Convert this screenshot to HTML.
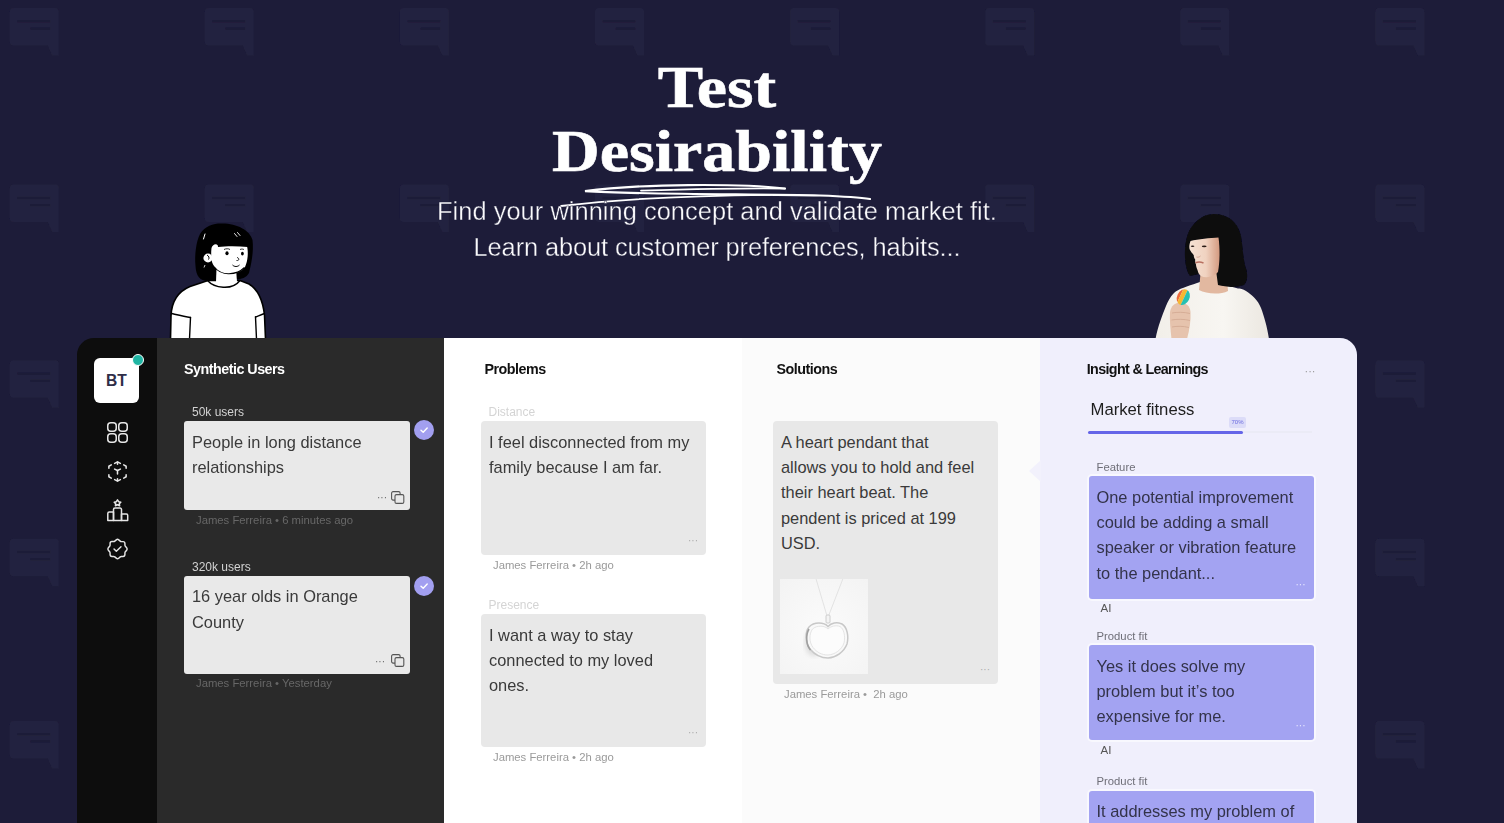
<!DOCTYPE html>
<html><head><meta charset="utf-8">
<style>
*{margin:0;padding:0;box-sizing:border-box}
html,body{width:1504px;height:823px;overflow:hidden}
body{background:#1d1c39;font-family:"Liberation Sans",sans-serif;position:relative}
.abs{position:absolute}
#bg{position:absolute;left:0;top:0}
.hero{position:absolute;left:0;width:1434px;text-align:center;color:#fff;font-family:"Liberation Serif",serif;font-weight:700}
.sub{position:absolute;left:0;width:1434px;text-align:center;color:#fafafc;font-size:25px;white-space:nowrap;-webkit-text-stroke:0.35px #1d1c39}
#panel{position:absolute;left:77px;top:338px;width:1280px;height:520px;border-radius:17px 17px 0 0;overflow:hidden}
.col{position:absolute;top:0;height:100%}
.ttl{position:absolute;font-weight:700;font-size:14.3px;letter-spacing:-0.5px;white-space:nowrap;line-height:16px}
.lbl{position:absolute;font-size:12px;white-space:nowrap}
.card{position:absolute;border-radius:4px;background:#e8e8e8}
.ct{position:absolute;left:8px;top:9px;font-size:16.4px;line-height:25.2px;color:#3a3a3a;white-space:nowrap}
.meta{position:absolute;font-size:11.3px;white-space:nowrap}
.dots{position:absolute;font-size:10px;letter-spacing:0px;line-height:10px}
</style></head><body>
<svg id="bg" width="1504" height="823">
<defs>
<g id="b">
<path d="M4 0H45a4 4 0 0 1 4 4V47.5H42.5L38 37.5H4a4 4 0 0 1-4-4V4a4 4 0 0 1 4-4Z" fill="#24233f"/>
<rect x="7.5" y="12.2" width="33" height="2.3" fill="#1d1c38"/>
<rect x="20.5" y="19.4" width="20" height="2.3" fill="#1d1c38"/>
</g>
<filter id="bb" x="-5%" y="-5%" width="110%" height="110%"><feGaussianBlur stdDeviation="0.6"/></filter>
</defs>
<g filter="url(#bb)">
<use href="#b" x="9.8" y="8.0"/>
<use href="#b" x="204.8" y="8.0"/>
<use href="#b" x="399.9" y="8.0"/>
<use href="#b" x="595.0" y="8.0"/>
<use href="#b" x="790.1" y="8.0"/>
<use href="#b" x="985.2" y="8.0"/>
<use href="#b" x="1180.3" y="8.0"/>
<use href="#b" x="1375.4" y="8.0"/>
<use href="#b" x="9.8" y="184.6"/>
<use href="#b" x="204.8" y="184.6"/>
<use href="#b" x="399.9" y="184.6"/>
<use href="#b" x="595.0" y="184.6"/>
<use href="#b" x="790.1" y="184.6"/>
<use href="#b" x="985.2" y="184.6"/>
<use href="#b" x="1180.3" y="184.6"/>
<use href="#b" x="1375.4" y="184.6"/>
<use href="#b" x="9.8" y="360.2"/>
<use href="#b" x="204.8" y="360.2"/>
<use href="#b" x="399.9" y="360.2"/>
<use href="#b" x="595.0" y="360.2"/>
<use href="#b" x="790.1" y="360.2"/>
<use href="#b" x="985.2" y="360.2"/>
<use href="#b" x="1180.3" y="360.2"/>
<use href="#b" x="1375.4" y="360.2"/>
<use href="#b" x="9.8" y="538.7"/>
<use href="#b" x="204.8" y="538.7"/>
<use href="#b" x="399.9" y="538.7"/>
<use href="#b" x="595.0" y="538.7"/>
<use href="#b" x="790.1" y="538.7"/>
<use href="#b" x="985.2" y="538.7"/>
<use href="#b" x="1180.3" y="538.7"/>
<use href="#b" x="1375.4" y="538.7"/>
<use href="#b" x="9.8" y="720.9"/>
<use href="#b" x="204.8" y="720.9"/>
<use href="#b" x="399.9" y="720.9"/>
<use href="#b" x="595.0" y="720.9"/>
<use href="#b" x="790.1" y="720.9"/>
<use href="#b" x="985.2" y="720.9"/>
<use href="#b" x="1180.3" y="720.9"/>
<use href="#b" x="1375.4" y="720.9"/>
</g>
</svg>

<div class="hero" style="top:55px;font-size:60px;line-height:64px;transform:scaleX(1.135);transform-origin:717px 0;-webkit-text-stroke:0.6px #fff">Test</div>
<div class="hero" style="top:118.8px;font-size:60px;line-height:64px;transform:scaleX(1.10);transform-origin:717px 0;-webkit-text-stroke:0.6px #fff">Desirability</div>
<svg class="abs" style="left:0;top:0" width="1000" height="215" viewBox="0 0 1000 215" fill="none" stroke="#fff" stroke-linecap="round">
<path d="M785 188.5 C740 183.5 640 183.5 585 191.2 C640 194.5 760 194 820 195.5 C845 196.5 860 197.5 870 199" stroke-width="2.2"/>
<path d="M641 190.6 C700 189 760 188 785 188.6" stroke-width="1.8"/>
<path d="M561 206 C620 199 700 195.5 770 194.8" stroke-width="1.8"/>
</svg>
<div class="sub" style="top:193px;line-height:36px;font-size:25.4px;letter-spacing:0.05px">Find your winning concept and validate market fit.</div>
<div class="sub" style="top:229px;line-height:36px;font-size:25.4px;letter-spacing:-0.1px">Learn about customer preferences, habits...</div>

<!-- cartoon girl -->
<svg class="abs" style="left:0;top:0" width="300" height="340" viewBox="0 0 300 340">
<g stroke="#000" stroke-linejoin="round" stroke-linecap="round">
<path d="M170.5 339 L171 316 C171.5 302 177 292 190 286.5 L208 280.5 L240 280.5 L249 284 C259 290 263 302 264.5 315 L265.5 339 Z" fill="#fff" stroke-width="1.6"/>
<path d="M171.5 313.5 C178 315 184 316.5 190.5 317.5" fill="none" stroke-width="1.4"/>
<path d="M190.5 317.5 L189.5 339" fill="none" stroke-width="1.4"/>
<path d="M264.5 313.5 C261 315 258 316 255.5 317" fill="none" stroke-width="1.4"/>
<path d="M255.5 317 L256.5 339" fill="none" stroke-width="1.4"/>
</g>
<path d="M221 223.5 C236 223 250 230 252.5 240 C254 252 251 265 249 273 C246 279 238 280 232 279 L208 281 C200 281 196 276 195.5 266 C194.5 255 196 242 200 234 C205 226 213 223.5 221 223.5 Z" fill="#000"/>
<path d="M216.5 268 L216 282 C222 289 232 289 237 282 L236 268 Z" fill="#fff"/>
<path d="M207.5 280.5 C214 288 232 291 240 280.5" fill="none" stroke="#000" stroke-width="1.4"/>
<path d="M211.5 248 C213 244 216 243.5 218 245.5 L247 246 C248.5 252 248 261 245 267 C242 271.5 236 274 228 273.8 C220 272.5 214 268 212 262 C211 257 211 252 211.5 248 Z" fill="#fff"/><path d="M214 267 C219 272.5 224 274 229 273.8 C236 273.5 241 271 244.5 267.5" fill="none" stroke="#000" stroke-width="1.1"/>
<ellipse cx="208" cy="258" rx="4.6" ry="4.4" fill="#fff"/>
<path d="M207 255 C209 256 209.5 258 208.5 259.5" fill="none" stroke="#000" stroke-width="1"/>
<path d="M217 236 C225 234 240 235 248 239 L248 247 C238 246 226 246 218 247 Z" fill="#000"/>
<path d="M205 234 L203.5 239" stroke="#fff" stroke-width="1" stroke-linecap="round"/>
<path d="M234.5 233.5 L237 236.5 M237.5 232.5 L240 235.5" stroke="#fff" stroke-width="0.9" stroke-linecap="round"/>
<path d="M205 265 L204 267.5" stroke="#fff" stroke-width="0.8"/>
<ellipse cx="227" cy="253.3" rx="1.6" ry="2" fill="#000"/>
<ellipse cx="242.4" cy="253.6" rx="1.4" ry="1.9" fill="#000"/>
<path d="M224 249.5 C226 248.5 228.5 248.5 230 249.5 M240 249.5 C241.5 248.8 243 249 244 249.6" stroke="#000" stroke-width="0.8" fill="none"/>
<path d="M237 257.5 C239.5 258 239.5 261 236.5 260.5" stroke="#000" stroke-width="0.9" fill="none"/>
<path d="M232.5 265 C234.5 267 237.5 267 239.5 265" stroke="#000" stroke-width="1" fill="none"/>
</svg>

<!-- photo woman -->
<svg class="abs" style="left:1140px;top:200px" width="140" height="140" viewBox="1140 200 140 140">
<defs>
<linearGradient id="shirt" x1="0" y1="0" x2="1" y2="0"><stop offset="0" stop-color="#f2efe9"/><stop offset="0.6" stop-color="#f8f6f2"/><stop offset="1" stop-color="#ebe7e0"/></linearGradient>
<linearGradient id="skin" x1="0" y1="0" x2="1" y2="0"><stop offset="0" stop-color="#f6e2d4"/><stop offset="0.55" stop-color="#f0d2c0"/><stop offset="1" stop-color="#d49a80"/></linearGradient>
<filter id="soft" x="-10%" y="-10%" width="120%" height="120%"><feGaussianBlur stdDeviation="0.5"/></filter>
</defs>
<g filter="url(#soft)">
<path d="M1197 283 C1188 286 1178 289 1174 293 C1170 297 1168 301 1166 306 C1162 316 1158 326 1155.5 339 L1269 339 C1267 326 1264 316 1261 308 C1258 300 1252 295 1246 291 C1243 289 1240 288.5 1238 288.5 L1225 285 L1200 282 Z" fill="url(#shirt)"/>
<path d="M1201 268 L1199 290 C1206 294 1220 295 1228 291 L1226 268 Z" fill="#e2b8a0"/>
<path d="M1213.7 214 C1228 214 1238 222 1241 236 C1243 248 1243 260 1246.5 270 C1248 277 1247 282 1244 285 C1236 288 1226 287 1218 285 L1216 270 L1190 276 C1187 272 1185.5 266 1185 258 C1184.5 246 1186 232 1194 224 C1199 218 1206 214 1213.7 214 Z" fill="#09090b"/>
<path d="M1190.5 241 C1198 239 1210 238 1218.5 237.5 C1220 248 1220 262 1218 272 C1214 277 1206 278.5 1201 276 C1199 274.5 1198 272.5 1197.5 270 C1196.5 268 1196 266 1196 264.5 C1195.2 263 1195 261 1195.2 259.5 C1194.2 258 1193.6 256.5 1193.8 255.2 C1192.5 253.5 1190.5 251.5 1189.5 249 C1189 246.5 1189.5 243.5 1190.5 241 Z" fill="url(#skin)"/>
<ellipse cx="1192.6" cy="246.3" rx="1.8" ry="0.8" fill="#2a1c18"/>
<ellipse cx="1204.2" cy="246.3" rx="2.4" ry="0.9" fill="#2a1c18"/>
<path d="M1195.5 262.8 C1198 261.8 1201 262 1203.5 263" stroke="#b86f60" stroke-width="1.5" fill="none"/>
<path d="M1196.5 257 C1198 257.5 1199.5 257 1200.5 256" stroke="#c99583" stroke-width="0.8" fill="none"/>
<path d="M1171.5 339 C1170.5 330 1169.5 320 1170 312 C1171 306 1175 302.5 1180 302.5 C1186 302.5 1190 306 1190.5 312 C1191 320 1189.5 330 1187 339 Z" fill="#e6c3ad"/>
<path d="M1172 313 C1177 312 1184 312 1190 313.5 M1171.5 320 C1177 319 1184 319 1190 320.5 M1172 327 C1177 326 1183 326 1189 327.5" stroke="#cfa48c" stroke-width="0.7" fill="none"/>
<g transform="rotate(25 1183.3 297.2)">
<clipPath id="objc"><ellipse cx="1183.3" cy="297.2" rx="6.2" ry="8.2"/></clipPath>
<g clip-path="url(#objc)">
<rect x="1176" y="288" width="4" height="18" fill="#ec6a3b"/>
<rect x="1180" y="288" width="4.2" height="18" fill="#f5b731"/>
<rect x="1184.2" y="288" width="6" height="18" fill="#27c0b2"/>
</g></g>
</g>
</svg>

<div id="panel">
 <div class="col" style="left:0;width:80px;background:#0d0d0d"></div>
 <div class="col" style="left:80px;width:287px;background:#2a2a2a"></div>
 <div class="col" style="left:367px;width:298px;background:#ffffff"></div>
 <div class="col" style="left:665px;width:298px;background:#fbfbfb"></div>
 <div class="col" style="left:963px;width:317px;background:#f0effc"></div>
</div>

<!-- sidebar -->
<div class="abs" style="left:94px;top:358px;width:45px;height:45px;background:#fff;border-radius:6px;color:#2f2e48;font-weight:700;font-size:15.6px;line-height:46px;text-align:center;letter-spacing:0.2px">BT</div>
<div class="abs" style="left:132px;top:354px;width:12px;height:12px;border-radius:50%;background:#1fb5a3;border:1.5px solid #fff"></div>
<svg class="abs" style="left:107px;top:422px" width="21" height="21" viewBox="0 0 21 21" fill="none" stroke="#e6e6e6" stroke-width="1.5">
<rect x="0.75" y="0.75" width="8.5" height="8.5" rx="3"/><rect x="11.75" y="0.75" width="8.5" height="8.5" rx="3"/>
<rect x="0.75" y="11.75" width="8.5" height="8.5" rx="3"/><rect x="11.75" y="11.75" width="8.5" height="8.5" rx="3"/>
</svg>
<svg class="abs" style="left:106px;top:460px" width="23" height="23" viewBox="0 0 24 24" fill="none" stroke="#e6e6e6" stroke-width="1.6" stroke-linecap="round" stroke-linejoin="round">
<path d="M9 3.5 L12 2 L15 3.5"/><path d="M12 2 V4.5"/>
<path d="M3 8.5 V6.5 L5.5 5"/><path d="M18.5 5 L21 6.5 V8.5"/>
<path d="M3 15.5 V17.5 L5.5 19"/><path d="M18.5 19 L21 17.5 V15.5"/>
<path d="M9 20.5 L12 22 L15 20.5"/><path d="M12 22 V19.5"/>
<path d="M9 9.5 L12 11 L15 9.5"/><path d="M12 11 V14.5"/>
</svg>
<svg class="abs" style="left:106px;top:498px" width="23" height="24" viewBox="0 0 23 24" fill="none" stroke="#e6e6e6" stroke-width="1.5" stroke-linejoin="round">
<path d="M11.5 1.8 L12.8 3.8 L14.8 4.2 L13.3 5.7 L13.6 7.8 L11.5 6.8 L9.4 7.8 L9.7 5.7 L8.2 4.2 L10.2 3.8 Z"/>
<path d="M1.8 22.5 V15.5 a1.5 1.5 0 0 1 1.5 -1.5 H7.5 V22.5 Z"/>
<path d="M7.5 22.5 V11.5 a1.5 1.5 0 0 1 1.5 -1.5 H14 a1.5 1.5 0 0 1 1.5 1.5 V22.5 Z"/>
<path d="M15.5 22.5 V16 H20.5 a1.2 1.2 0 0 1 1.2 1.2 V22.5 Z"/>
</svg>
<svg class="abs" style="left:106px;top:537px" width="23" height="24" viewBox="0 0 24 24" fill="none" stroke="#e6e6e6" stroke-width="1.5" stroke-linecap="round" stroke-linejoin="round">
<path d="M10.75 2.45c.69-.59 1.82-.59 2.52 0l1.58 1.36c.3.26.86.47 1.26.47h1.7c1.06 0 1.93.87 1.93 1.93v1.7c0 .39.21.96.47 1.26l1.36 1.58c.59.69.59 1.82 0 2.52l-1.36 1.58c-.26.3-.47.86-.47 1.26v1.7c0 1.06-.87 1.93-1.93 1.93h-1.7c-.39 0-.96.21-1.26.47l-1.58 1.36c-.69.59-1.82.59-2.52 0l-1.58-1.36c-.3-.26-.86-.47-1.26-.47H6.18c-1.06 0-1.93-.87-1.93-1.93V16.1c0-.39-.21-.95-.46-1.25l-1.35-1.59c-.58-.69-.58-1.81 0-2.5l1.35-1.59c.25-.3.46-.86.46-1.25V6.2c0-1.06.87-1.93 1.93-1.93h1.73c.39 0 .96-.21 1.26-.47l1.58-1.35z"/>
<path d="M8.38 12 L10.79 14.42 L15.62 9.58"/>
</svg>

<!-- synthetic users column -->
<div class="ttl" style="left:184px;top:361.3px;color:#fff">Synthetic Users</div>
<div class="lbl" style="left:192px;top:404.6px;color:#d2d2d2;line-height:14px">50k users</div>
<div class="card" style="left:184px;top:421px;width:226px;height:89px;background:#e9e9e9;border-radius:3px">
 <div class="ct" style="top:8.9px">People in long distance<br>relationships</div>
 <div class="dots" style="left:193px;top:72px;color:#666">···</div>
 <svg class="abs" style="left:207px;top:70px" width="14" height="13" viewBox="0 0 14 13" fill="none" stroke="#555" stroke-width="1.1"><rect x="0.6" y="0.6" width="8.5" height="8.5" rx="1.5"/><rect x="4" y="3.6" width="8.8" height="8.8" rx="1.5" fill="#e9e9e9"/></svg>
</div>
<div class="abs" style="left:413.5px;top:420px;width:20px;height:20px;border-radius:50%;background:#a29ff0"></div>
<svg class="abs" style="left:413.5px;top:420px" width="20" height="20" viewBox="0 0 20 20" fill="none" stroke="#fff" stroke-width="1.4" stroke-linecap="round" stroke-linejoin="round"><path d="M7 10.2 L9.2 12.3 L13.2 8"/></svg>
<div class="meta" style="left:196px;top:513.6px;color:#676767;line-height:13px">James Ferreira • 6 minutes ago</div>

<div class="lbl" style="left:192px;top:559.8px;color:#d2d2d2;line-height:14px">320k users</div>
<div class="card" style="left:184px;top:575.5px;width:226px;height:98px;background:#e9e9e9;border-radius:3px">
 <div class="ct" style="top:8.9px">16 year olds in Orange<br>County</div>
 <div class="dots" style="left:191px;top:81px;color:#666">···</div>
 <svg class="abs" style="left:207px;top:78px" width="14" height="13" viewBox="0 0 14 13" fill="none" stroke="#555" stroke-width="1.1"><rect x="0.6" y="0.6" width="8.5" height="8.5" rx="1.5"/><rect x="4" y="3.6" width="8.8" height="8.8" rx="1.5" fill="#e9e9e9"/></svg>
</div>
<div class="abs" style="left:413.5px;top:575.5px;width:20px;height:20px;border-radius:50%;background:#a29ff0"></div>
<svg class="abs" style="left:413.5px;top:575.5px" width="20" height="20" viewBox="0 0 20 20" fill="none" stroke="#fff" stroke-width="1.4" stroke-linecap="round" stroke-linejoin="round"><path d="M7 10.2 L9.2 12.3 L13.2 8"/></svg>
<div class="meta" style="left:196px;top:677.1px;color:#676767;line-height:13px">James Ferreira • Yesterday</div>

<!-- problems column -->
<div class="ttl" style="left:484.5px;top:361.3px;color:#111">Problems</div>
<div class="lbl" style="left:488.5px;top:405.2px;color:#d4d4d4;line-height:14px">Distance</div>
<div class="card" style="left:481px;top:421px;width:225px;height:134px">
 <div class="ct" style="top:8.9px">I feel disconnected from my<br>family because I am far.</div>
 <div class="dots" style="left:207px;top:115px;color:#aaa">···</div>
</div>
<div class="meta" style="left:493px;top:558.6px;color:#9a9a9a;line-height:13px">James Ferreira • 2h ago</div>
<div class="lbl" style="left:488.5px;top:597.9px;color:#d4d4d4;line-height:14px">Presence</div>
<div class="card" style="left:481px;top:614px;width:225px;height:133px">
 <div class="ct" style="top:8.9px">I want a way to stay<br>connected to my loved<br>ones.</div>
 <div class="dots" style="left:207px;top:114px;color:#aaa">···</div>
</div>
<div class="meta" style="left:493px;top:751.1px;color:#9a9a9a;line-height:13px">James Ferreira • 2h ago</div>

<!-- solutions column -->
<div class="ttl" style="left:776.5px;top:361.3px;color:#111">Solutions</div>
<div class="card" style="left:773px;top:421px;width:225px;height:263px">
 <div class="ct" style="top:8.9px">A heart pendant that<br>allows you to hold and feel<br>their heart beat. The<br>pendent is priced at 199<br>USD.</div>
 <svg class="abs" style="left:7px;top:158px" width="88" height="95" viewBox="0 0 88 95">
  <defs><radialGradient id="pg" cx="0.5" cy="0.55" r="0.75"><stop offset="0" stop-color="#fbfbfb"/><stop offset="1" stop-color="#f3f3f3"/></radialGradient>
  <filter id="blur1"><feGaussianBlur stdDeviation="2.5"/></filter></defs>
  <rect width="88" height="95" fill="url(#pg)"/>
  <path d="M35.5 -2 L47 37 M63.6 -2 L48.5 37" stroke="#e0e0e0" stroke-width="0.9" fill="none"/>
  <ellipse cx="34" cy="64" rx="9" ry="13" fill="#dcdcdc" filter="url(#blur1)"/>
  <rect x="46" y="36" width="4" height="8" rx="1" fill="#f4f4f4" stroke="#c4c4c4" stroke-width="0.8"/>
  <path d="M48 47.5 C44 43 34 42.5 29 48 C25 53 25 63 30 70 C35 76 42 79 48 79 C56 78.5 64 73 67 65 C69 57 67 48 62 45 C57 42.5 51 44 48 47.5 Z" fill="#f9f9f9" stroke="#c8c8c8" stroke-width="1.5"/>
  <path d="M29 50 C25.5 56 26 66 30.5 71" stroke="#a0a0a0" stroke-width="1.6" fill="none"/>
  <path d="M48 50 C45 46.5 37 46 32.5 50 C29 55 29 63 33 68.5 C37 73.5 42 76 48 76 C55 75.5 61.5 71 64 64 C65.5 57 64 50 60 47.5 C56 46 51 47 48 50 Z" fill="#fcfcfc" stroke="#dedede" stroke-width="0.8"/>
 </svg>
 <div class="dots" style="left:207px;top:244px;color:#aaa">···</div>
</div>
<div class="meta" style="left:784px;top:687.6px;color:#9a9a9a;line-height:13px">James Ferreira • &nbsp;2h ago</div>

<!-- insight column -->
<svg class="abs" style="left:1028px;top:460px" width="13" height="22" viewBox="0 0 13 22"><path d="M13 0 L1 11 L13 22 Z" fill="#f2f1fc"/></svg>
<div class="ttl" style="left:1086.8px;top:361.3px;color:#111;letter-spacing:-0.65px">Insight &amp; Learnings</div>
<div class="dots" style="left:1304.5px;top:366px;color:#9a9a9a;font-size:11px">···</div>
<div class="abs" style="left:1090.5px;top:400.3px;font-size:16.7px;line-height:20px;color:#1e1e1e;white-space:nowrap">Market fitness</div>
<div class="abs" style="left:1229px;top:417px;width:17px;height:11px;background:#dcdcf8;border-radius:2px;color:#6a6ae0;font-size:6px;line-height:11px;text-align:center">70%</div>
<div class="abs" style="left:1088px;top:431px;width:224px;height:2px;background:#ebebf6"></div>
<div class="abs" style="left:1088px;top:430.5px;width:155px;height:3px;background:#6565e8;border-radius:2px"></div>
<div class="meta" style="left:1096.5px;top:461.1px;color:#6f6f78;line-height:13px">Feature</div>
<div class="card" style="left:1088.5px;top:476px;width:225.5px;height:122.5px;background:#a3a3f2;border-radius:3px;box-shadow:0 0 0 2px rgba(255,255,255,0.55)">
 <div class="ct" style="top:8.9px;color:#33334a">One potential improvement<br>could be adding a small<br>speaker or vibration feature<br>to the pendant...</div>
 <div class="dots" style="left:207px;top:104px;color:#e8e8ff">···</div>
</div>
<div class="lbl" style="left:1100.5px;top:601.4px;color:#555;line-height:14px;font-size:11.5px">AI</div>
<div class="meta" style="left:1096.5px;top:629.6px;color:#6f6f78;line-height:13px">Product fit</div>
<div class="card" style="left:1088.5px;top:645px;width:225.5px;height:95px;background:#a3a3f2;border-radius:3px;box-shadow:0 0 0 2px rgba(255,255,255,0.55)">
 <div class="ct" style="top:8.9px;color:#33334a">Yes it does solve my<br>problem but it’s too<br>expensive for me.</div>
 <div class="dots" style="left:207px;top:76px;color:#e8e8ff">···</div>
</div>
<div class="lbl" style="left:1100.5px;top:743.1px;color:#555;line-height:14px;font-size:11.5px">AI</div>
<div class="meta" style="left:1096.5px;top:774.6px;color:#6f6f78;line-height:13px">Product fit</div>
<div class="card" style="left:1088.5px;top:790.5px;width:225.5px;height:60px;background:#a3a3f2;border-radius:3px;box-shadow:0 0 0 2px rgba(255,255,255,0.55)">
 <div class="ct" style="top:8.9px;color:#33334a">It addresses my problem of</div>
</div>
</body></html>
